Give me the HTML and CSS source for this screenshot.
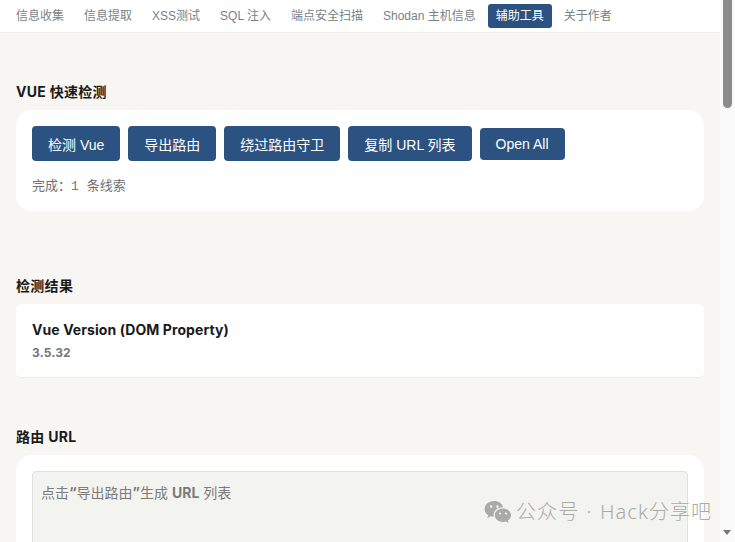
FILE: index.html
```html
<!DOCTYPE html>
<html lang="zh">
<head>
<meta charset="utf-8">
<title>辅助工具</title>
<link rel="stylesheet" href="styles.css">
</head>
<body>
<div class="page">
  <div class="main">
    <nav class="nav">
      <a class="tab">信息收集</a>
      <a class="tab">信息提取</a>
      <a class="tab">XSS测试</a>
      <a class="tab">SQL 注入</a>
      <a class="tab">端点安全扫描</a>
      <a class="tab">Shodan 主机信息</a>
      <a class="tab active">辅助工具</a>
      <a class="tab">关于作者</a>
    </nav>
    <section class="section first">
      <h2 class="heading">VUE 快速检测</h2>
      <div class="card">
        <div class="buttons">
          <button class="btn">检测 Vue</button>
          <button class="btn">导出路由</button>
          <button class="btn">绕过路由守卫</button>
          <button class="btn">复制 URL 列表</button>
          <button class="btn short">Open All</button>
        </div>
        <p class="status">完成：<span class="num">1</span> 条线索</p>
      </div>
    </section>
    <section class="section second">
      <h2 class="heading">检测结果</h2>
      <div class="result">
        <div class="result-title">Vue Version (DOM Property)</div>
        <div class="result-value">3.5.32</div>
      </div>
    </section>
    <section class="section third">
      <h2 class="heading">路由 URL</h2>
      <div class="card tall">
        <div class="output">点击<b>“</b>导出路由<b>”</b>生成 <b>URL</b> 列表</div>
      </div>
    </section>
  </div>
  <div class="scrollbar">
    <div class="thumb"></div>
    <div class="arrow"></div>
  </div>
</div>
<div class="watermark">
  <svg class="wechat" width="28" height="24" viewBox="0 0 28 24">
    <path d="M10.5 1C5 1 .6 4.6.6 9c0 2.5 1.4 4.700 3.600 6.200L3.300 18l3.300-1.700c1.100.3 2.200.5 3.300.5-.2-.7-.3-1.300-.3-2 0-4.200 4-7.500 9-7.500h.7C18.100 3.700 14.600 1 10.500 1z" fill="#aaaba6"/>
    <circle cx="7.200" cy="6.500" r="1.300" fill="#f3f3ef"/>
    <circle cx="13.400" cy="6.500" r="1.300" fill="#f3f3ef"/>
    <path d="M19 8.500c-4.600 0-8.200 3-8.200 6.700s3.600 6.700 8.200 6.700c1 0 1.900-.2 2.800-.4l2.700 1.500-.7-2.400c1.900-1.200 3.200-3.200 3.200-5.400 0-3.700-3.600-6.700-8-6.700z" fill="#aaaba6"/>
    <circle cx="16" cy="13.500" r="1.100" fill="#f3f3ef"/>
    <circle cx="22" cy="13.500" r="1.100" fill="#f3f3ef"/>
  </svg>
  <span class="wm-text">公众号 · Hack分享吧</span>
</div>
</body>
</html>
```
FILE: styles.css
```css
* { box-sizing: border-box; }
html, body { margin: 0; padding: 0; height: 100%; overflow: hidden; }
body {
  position: relative;
  background: #f7f6f2;
  font-family: Inter, "Noto Sans CJK SC", sans-serif;
  color: #1a1a1a;
}
.page { display: flex; height: 542px; overflow: hidden; }
.main { flex: 1; min-width: 0; }
.nav {
  display: flex;
  align-items: center;
  gap: 4px;
  height: 33px;
  padding: 0 8px;
  background: #fff;
  border-bottom: 1px solid #eeeeee;
}
.tab {
  padding: 4px 8px;
  border-radius: 3px;
  font-family: "Liberation Sans", "Noto Sans CJK SC", sans-serif;
  font-size: 12px;
  line-height: 16px;
  color: #7a7f85;
  white-space: nowrap;
}
.tab.active { background: #2c5282; color: #fff; }
.section { padding: 0 16px; }
.first { padding-top: 50px; }
.second { padding-top: 66px; }
.third { padding-top: 50px; }
.heading {
  margin: 0 0 9px;
  font-size: 14px;
  line-height: 18px;
  font-weight: 700;
  letter-spacing: 0.3px;
  color: #1a1a1a;
}
.card {
  background: #fff;
  border-radius: 16px;
  padding: 16px;
  height: 101px;
}
.card.tall { height: 300px; }
.buttons { display: flex; align-items: center; gap: 8px; }
.btn {
  height: 35px;
  padding: 0 16px;
  border: 0;
  border-radius: 4px;
  background: #2c5282;
  color: #fff;
  font-family: "Liberation Sans", "Noto Sans CJK SC", sans-serif;
  font-size: 14px;
  white-space: nowrap;
}
.btn.short { height: 32px; }
.status {
  margin: 17px 0 0;
  font-family: "Liberation Mono", "Noto Sans CJK SC", monospace;
  font-size: 13px;
  line-height: 18px;
  color: #6f6f6f;
}
.num { color: #a0714f; }
.result {
  background: #fff;
  border-bottom: 1px solid #eeeeea;
  border-radius: 5px;
  padding: 16px;
  height: 74px;
}
.result-title {
  font-size: 14px;
  line-height: 20px;
  font-weight: 700;
  letter-spacing: 0.08px;
  color: #1a1a1a;
}
.result-value {
  margin-top: 5px;
  font-size: 12px;
  line-height: 16px;
  font-weight: 700;
  letter-spacing: 0.15px;
  color: #71777f;
}
.output {
  height: 200px;
  padding: 12px 8px;
  background: #f3f3ef;
  border: 1px solid #e2e2dc;
  border-radius: 4px;
  font-size: 14px;
  line-height: 18px;
  color: #7b7b7b;
}
.scrollbar {
  position: relative;
  flex: none;
  width: 15px;
  background: #fafafa;
}
.thumb {
  width: 9px;
  height: 108px;
  margin-left: 3px;
  background: #8c8c8c;
  border-radius: 0 0 5px 5px;
}
.arrow {
  position: absolute;
  left: 3px;
  bottom: 7px;
  width: 0;
  height: 0;
  border-left: 4.500px solid transparent;
  border-right: 4.500px solid transparent;
  border-top: 5px solid #777;
}
.watermark {
  position: absolute;
  left: 484px;
  top: 500px;
  display: flex;
  align-items: center;
  gap: 4px;
}
.wechat { display: block; }
.wm-text {
  font-family: "Noto Sans", "Noto Sans CJK SC", sans-serif;
  font-size: 20px;
  font-weight: 300;
  line-height: 24px;
  letter-spacing: 1.1px;
  word-spacing: 1px;
  color: #aaaba6;
  white-space: nowrap;
}
```
